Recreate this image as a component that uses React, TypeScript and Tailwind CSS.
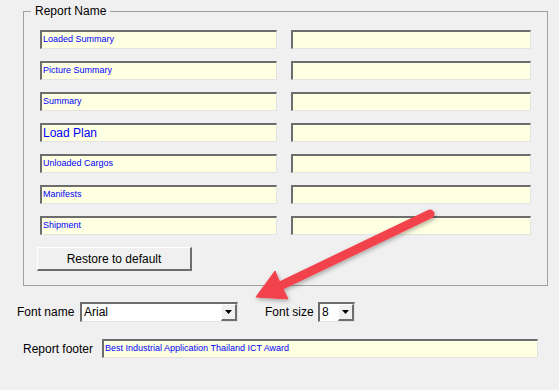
import React from 'react'

const reportNames = [
  { value: 'Loaded Summary', big: false },
  { value: 'Picture Summary', big: false },
  { value: 'Summary', big: false },
  { value: 'Load Plan', big: true },
  { value: 'Unloaded Cargos', big: false },
  { value: 'Manifests', big: false },
  { value: 'Shipment', big: false },
]

const sunken =
  'border-t-2 border-l-2 border-b border-r border-t-[#6d6d6d] border-l-[#6d6d6d] border-b-[#e3e3e3] border-r-[#e3e3e3]'

function TextBox({ value, big, className }: { value?: string; big?: boolean; className?: string }) {
  return (
    <div className={`h-[19px] bg-[#ffffe1] ${sunken} flex items-center pl-[1px] overflow-hidden ${className ?? ''}`}>
      <span className={`text-[#0000ff] whitespace-nowrap ${big ? 'text-[12px]' : 'text-[9px]'}`}>{value}</span>
    </div>
  )
}

function DropArrow() {
  return (
    <div className="w-[16px] h-full bg-[#f0f0f0] border-t border-l border-white border-b-2 border-r-2 border-b-[#6d6d6d] border-r-[#6d6d6d] flex items-center justify-center">
      <svg width="7" height="4" viewBox="0 0 7 4">
        <polygon points="0,0 7,0 3.5,4" fill="#000" />
      </svg>
    </div>
  )
}

function ComboBox({ value, width }: { value: string; width: string }) {
  return (
    <div className={`h-[20px] ${width} bg-white ${sunken} flex items-stretch`}>
      <span className="flex-1 text-[12px] leading-[17px] pl-[2px] text-black">{value}</span>
      <DropArrow />
    </div>
  )
}

function RedArrow() {
  return (
    <svg className="absolute left-0 top-0 pointer-events-none" width="559" height="390" viewBox="0 0 559 390">
      <defs>
        <filter id="shadow" x="-20%" y="-20%" width="140%" height="140%">
          <feDropShadow dx="1" dy="2" stdDeviation="2" floodColor="#000" floodOpacity="0.3" />
        </filter>
      </defs>
      <g filter="url(#shadow)" fill="#f2434b" stroke="#f2434b">
        <line x1="430" y1="214" x2="278" y2="287" strokeWidth="9" strokeLinecap="round" />
        <polygon points="256,297 275,271 281,285 288,299" strokeWidth="1" strokeLinejoin="round" />
      </g>
    </svg>
  )
}

export default function App() {
  return (
    <div
      className="relative w-[559px] h-[390px] bg-[#f0f0f0] overflow-hidden text-black"
      style={{ fontFamily: '"Liberation Sans", Arial, sans-serif' }}
    >
      <div className="pt-[11px] pl-[23px]">
        <div className="relative w-[525px] h-[275px] border border-[#a0a0a0] pt-[18px] pl-[16px] pr-[15px]">
          <span className="absolute -top-[8px] left-[7px] px-[4px] bg-[#f0f0f0] text-[12px] leading-[14px]">
            Report Name
          </span>
          <div className="flex flex-col gap-[12px]">
            {reportNames.map((r) => (
              <div key={r.value} className="flex gap-[14px]">
                <TextBox value={r.value} big={r.big} className="w-[237px]" />
                <TextBox className="w-[240px]" />
              </div>
            ))}
          </div>
          <button
            type="button"
            className="mt-[12px] -ml-[3px] w-[155px] h-[24px] bg-[#f0f0f0] border-t border-l border-white border-b-2 border-r-2 border-b-[#6d6d6d] border-r-[#6d6d6d] text-[12px] text-black"
          >
            Restore to default
          </button>
        </div>
      </div>

      <div className="flex items-center mt-[16px] pl-[17px] h-[20px]">
        <span className="text-[12px] w-[63px]">Font name</span>
        <ComboBox value="Arial" width="w-[158px]" />
        <span className="text-[12px] ml-[27px] w-[53px]">Font size</span>
        <ComboBox value="8" width="w-[37px]" />
      </div>

      <div className="flex items-center mt-[17px] pl-[23px]">
        <span className="text-[12px] w-[79px]">Report footer</span>
        <div className={`h-[19px] w-[436px] bg-[#ffffe1] ${sunken} flex items-center pl-[1px]`}>
          <span className="text-[9px] text-[#0000ff] whitespace-nowrap">Best Industrial Application Thailand ICT Award</span>
        </div>
      </div>

      <RedArrow />
    </div>
  )
}
